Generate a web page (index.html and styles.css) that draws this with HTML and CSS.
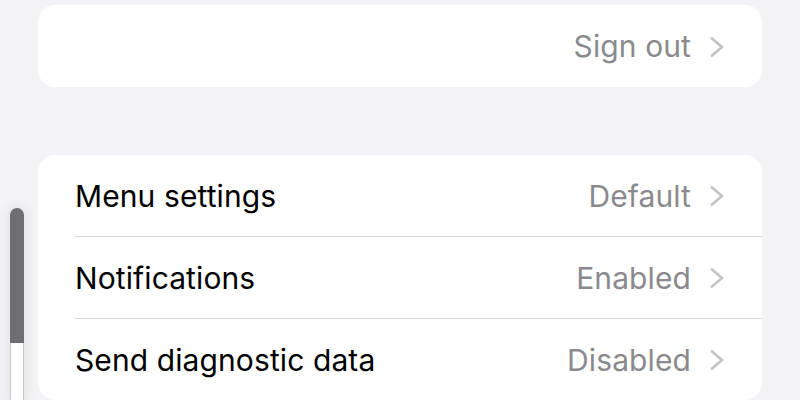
FILE: index.html
```html
<!DOCTYPE html>
<html lang="en">
<head>
<meta charset="utf-8">
<title>Settings</title>
<link rel="stylesheet" href="styles.css">
</head>
<body>
<main class="page">
  <section class="card card-single">
    <div class="row row-end">
      <span class="value">Sign out</span>
      <svg class="chev" viewBox="0 0 14 20" aria-hidden="true"><path d="M2 1.5 L12 10 L2 18.5"/></svg>
    </div>
  </section>

  <section class="card">
    <div class="row">
      <span class="label">Menu settings</span>
      <span class="value">Default</span>
      <svg class="chev" viewBox="0 0 14 20" aria-hidden="true"><path d="M2 1.5 L12 10 L2 18.5"/></svg>
    </div>
    <div class="divider"></div>
    <div class="row">
      <span class="label">Notifications</span>
      <span class="value">Enabled</span>
      <svg class="chev" viewBox="0 0 14 20" aria-hidden="true"><path d="M2 1.5 L12 10 L2 18.5"/></svg>
    </div>
    <div class="divider"></div>
    <div class="row">
      <span class="label">Send diagnostic data</span>
      <span class="value">Disabled</span>
      <svg class="chev" viewBox="0 0 14 20" aria-hidden="true"><path d="M2 1.5 L12 10 L2 18.5"/></svg>
    </div>
  </section>
</main>

<div class="scrollbar">
  <div class="thumb"></div>
  <div class="track"></div>
</div>
</body>
</html>
```

FILE: styles.css
```css
html, body {
  margin: 0;
  padding: 0;
  height: 100%;
  overflow: hidden;
}

body {
  background: #f2f2f7;
  font-family: Inter, "Liberation Sans", sans-serif;
  color: #000;
}

.page {
  display: flex;
  flex-direction: column;
  gap: 68px;
  padding: 5px 38px 0 38px;
}

.card {
  background: #ffffff;
  border-radius: 17px;
  display: flex;
  flex-direction: column;
}

.card-single .row {
  height: 82px;
}

.row {
  height: 81px;
  display: flex;
  align-items: center;
  padding: 0 38px 0 37px;
  font-size: 30px;
  letter-spacing: 0.1px;
}

.row-end {
  justify-content: flex-end;
}

.label {
  flex: 1;
}

.value {
  color: #8a8a8e;
}

.chev {
  width: 14px;
  height: 20px;
  margin-left: 19px;
  margin-top: 1px;
}

.chev path {
  fill: none;
  stroke: #c4c4c7;
  stroke-width: 2.8;
  stroke-linecap: round;
  stroke-linejoin: round;
}

.divider {
  height: 1px;
  background: #d8d8dc;
  margin-left: 37px;
}

.scrollbar {
  position: absolute;
  left: 10px;
  top: 208px;
  width: 14px;
  height: 192px;
  display: flex;
  flex-direction: column;
  box-shadow: 0 0 10px 4px rgba(0, 0, 0, 0.05);
  border-radius: 7px 7px 0 0;
}

.thumb {
  height: 135px;
  background: #6d6d72;
  border-radius: 7px 7px 0 0;
}

.track {
  flex: 1;
  background: #ffffff;
  border-left: 1px solid #c9c9ce;
  border-right: 1px solid #c9c9ce;
}
```
